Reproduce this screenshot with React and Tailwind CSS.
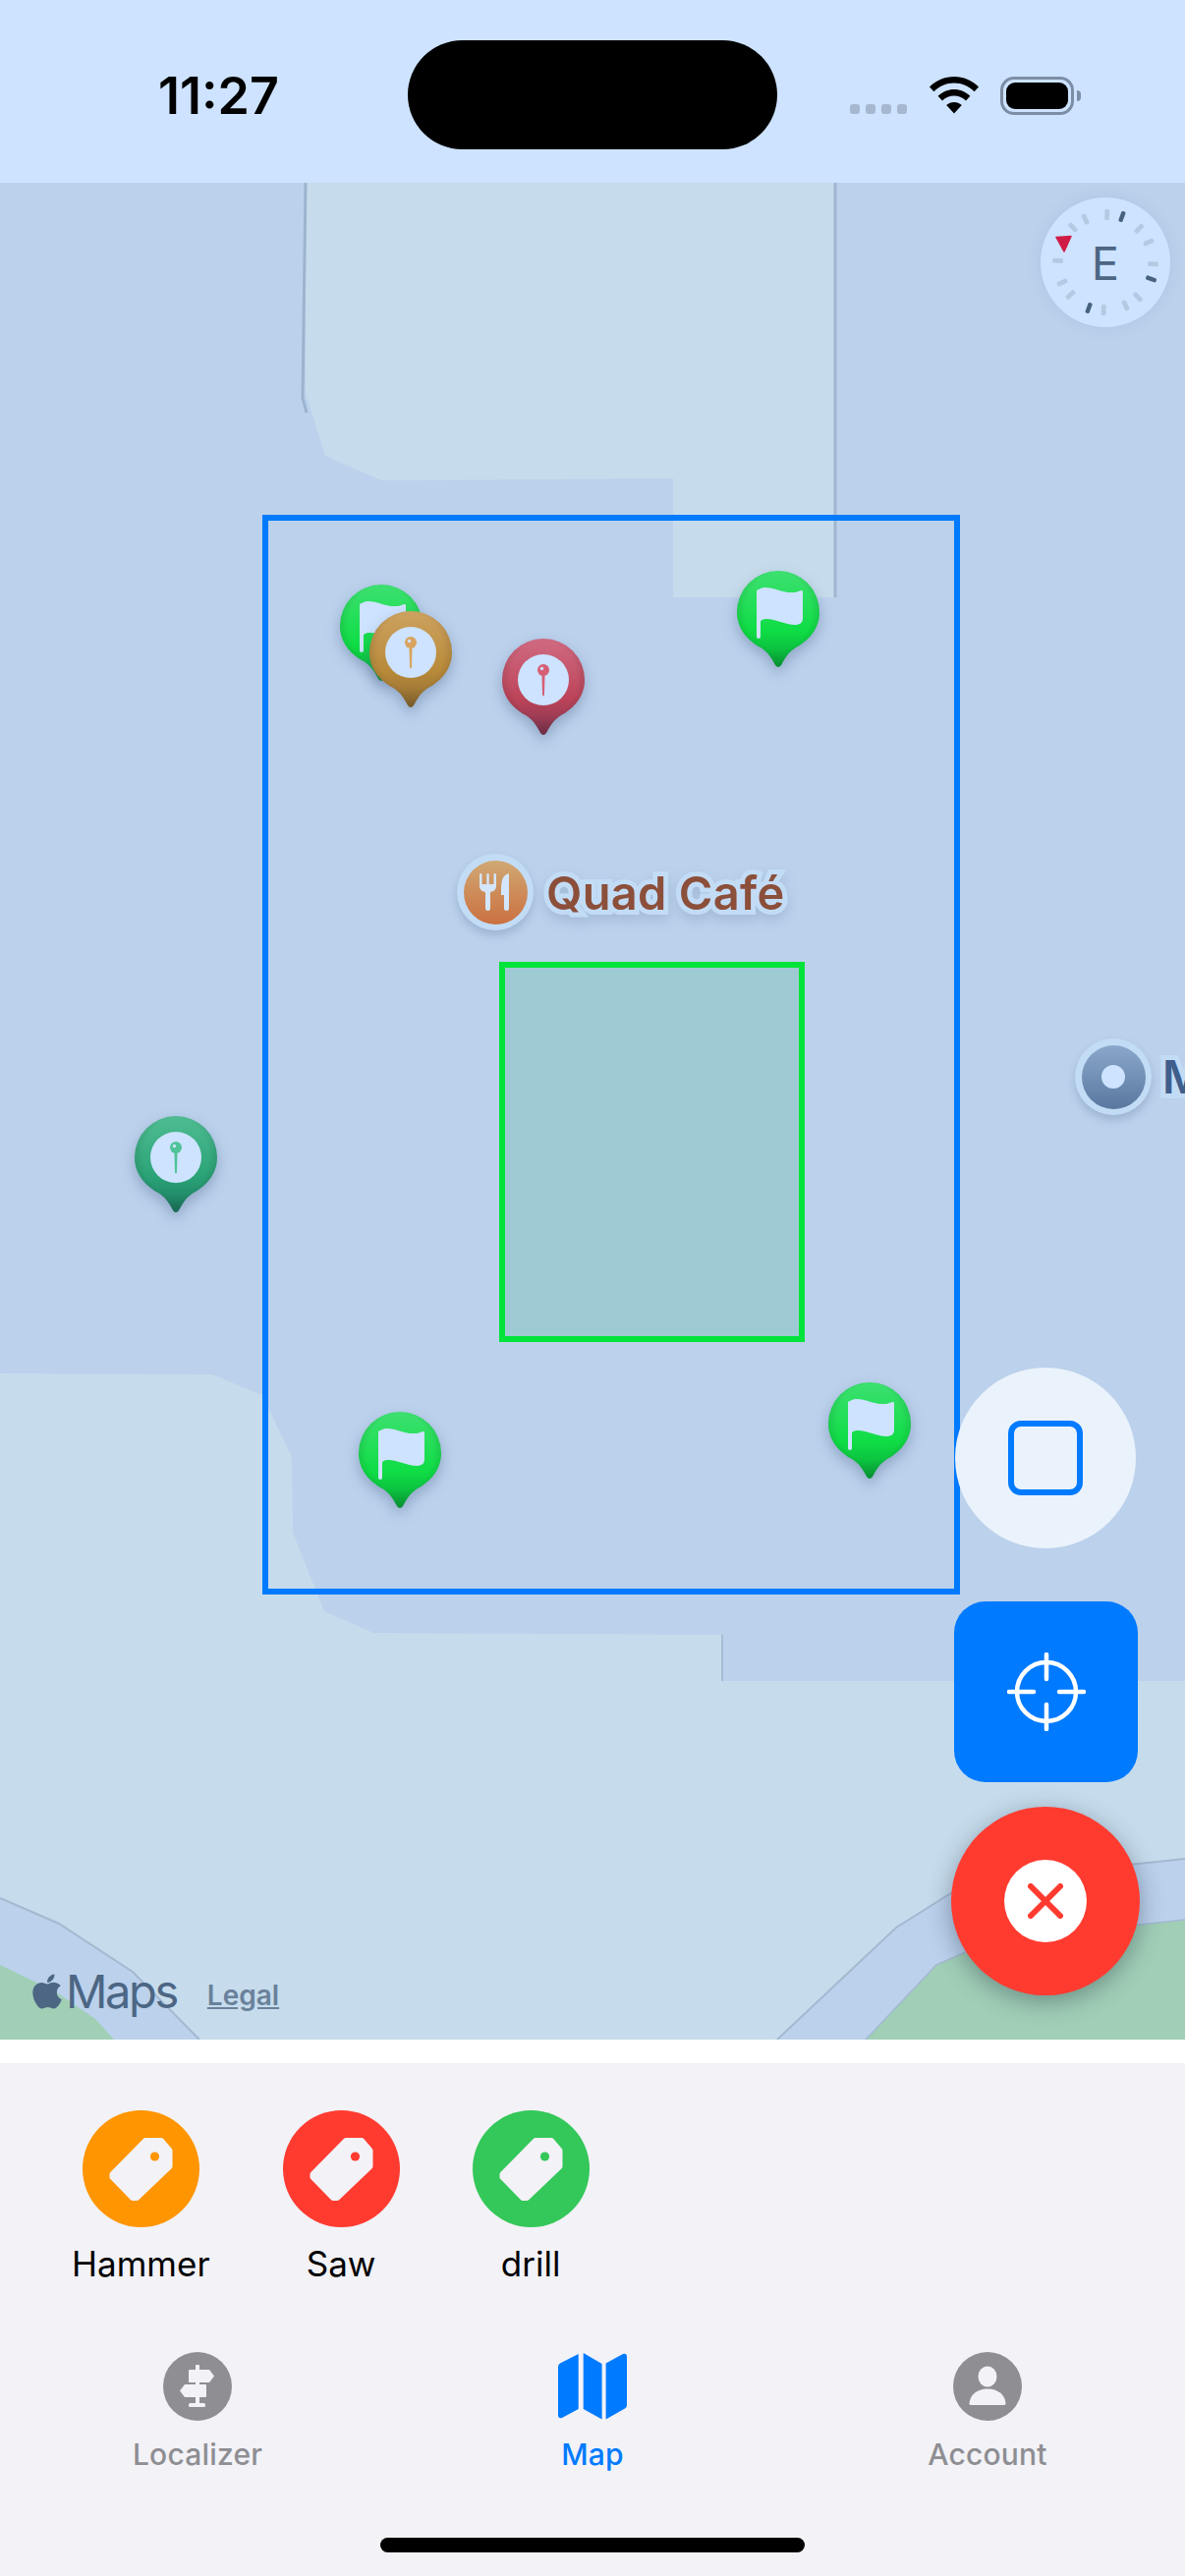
import React from "react";
import { FaApple } from "react-icons/fa";

const font = "font-['Inter','Liberation_Sans',sans-serif]";

function Flag() {
  return (
    <g fill="#cde3ff">
      <rect x="20" y="19" width="4" height="50" rx="2" />
      <path d="M20 24C20 19 24 17 29 17C38 17 47 23 58 22C61 22 64 20 66 20C67 20 67 21 67 22V48C67 53 64 55 59 55C49 55 40 49 30 49C27 49 24 50 24 52V40H20Z" />
    </g>
  );
}

function Needle({ tone }) {
  return (
    <g>
      <circle cx="42" cy="42" r="26" fill="#cde3ff" />
      <path d="M40.4 34H43.6L43 57Q42 60 41 57Z" fill={tone} />
      <circle cx="42" cy="32" r="6" fill={tone} />
      <circle cx="40.5" cy="30.5" r="1.7" fill="#cde3ff" />
    </g>
  );
}

function Pin({ className, id, top, mid, bottom, tone, flag }) {
  return (
    <svg
      className={`absolute w-[84px] h-[100px] drop-shadow-[0_6px_7px_rgba(70,95,135,0.38)] ${className}`}
      viewBox="0 0 84 100"
    >
      <defs>
        <linearGradient id={id} x1="0" y1="0" x2="0" y2="1">
          <stop offset="0" stopColor={top} />
          <stop offset="0.62" stopColor={mid} />
          <stop offset="1" stopColor={bottom} />
        </linearGradient>
        <radialGradient id={`${id}e`} cx="0.5" cy="0.42" r="0.55">
          <stop offset="0.72" stopColor="#000" stopOpacity="0" />
          <stop offset="1" stopColor="#000" stopOpacity="0.14" />
        </radialGradient>
      </defs>
      <path
        d="M42 0A42 42 0 0 1 84 42C84 59 73 71 60 78C53 82 48 90 45 96Q42 100 39 96C36 90 31 82 24 78C11 71 0 59 0 42A42 42 0 0 1 42 0Z"
        fill={`url(#${id})`}
      />
      <path
        d="M42 0A42 42 0 0 1 84 42C84 59 73 71 60 78C53 82 48 90 45 96Q42 100 39 96C36 90 31 82 24 78C11 71 0 59 0 42A42 42 0 0 1 42 0Z"
        fill={`url(#${id}e)`}
      />
      {flag ? <Flag /> : <Needle tone={tone} />}
    </svg>
  );
}

function MapBase() {
  return (
    <svg className="absolute inset-0 w-full h-full" viewBox="0 186 1206 1890" preserveAspectRatio="none">
      <rect x="0" y="186" width="1206" height="1890" fill="#bbd1ec" />
      <path d="M311 186H850V608H685V487L388 489L331 464L311 400Z" fill="#c6dcec" />
      <path d="M311 186L308 405L312 420" fill="none" stroke="#9db4ce" strokeWidth="3" />
      <path d="M850 186V608" fill="none" stroke="#a0b6cf" strokeWidth="3" />
      <path
        d="M0 1398L216 1399L267 1420L297 1483L298 1560L330 1640L380 1662L735 1664V1711H1206V2076H0Z"
        fill="#c6dcec"
      />
      <path d="M735 1664V1711" fill="none" stroke="#9db4ce" strokeWidth="1.5" />
      <path d="M0 1932L60 1958L135 2007L203 2076H0Z" fill="#bbd1ec" />
      <path d="M0 1932L60 1958L135 2007L203 2076" fill="none" stroke="#a3b9d0" strokeWidth="2" />
      <path d="M0 2000L56 2027L97 2055L116 2076H0Z" fill="#a0cfb6" />
      <path d="M791 2076L912 1962L987 1915L1206 1892V2076Z" fill="#bbd1ec" />
      <path d="M791 2076L912 1962L987 1915L1206 1892" fill="none" stroke="#a3b9d0" strokeWidth="2" />
      <path d="M881 2076L953 2000L1010 1975L1206 1954V2076Z" fill="#a0cfb6" />
      <path d="M881 2076L953 2000L1010 1975L1206 1954" fill="none" stroke="#a3b9d0" strokeWidth="1.5" />
    </svg>
  );
}

const compassLight = [2, 45, 65, 92, 137, 155, 182, 227, 245, 272, 317, 335];
const compassDark = [20, 110, 200];

function Compass() {
  return (
    <div className="absolute left-[1059px] top-[15px] w-[132px] h-[132px] rounded-full bg-[#cde3ff] shadow-[0_0_14px_rgba(120,150,190,0.18)] flex items-center justify-center">
      <svg className="absolute inset-0 w-full h-full" viewBox="-66 -66 132 132">
        {compassLight.map((a) => (
          <rect key={a} x="-2.4" y="-54" width="4.8" height="11" rx="1.5" fill="#b3cbe2" transform={`rotate(${a})`} />
        ))}
        {compassDark.map((a) => (
          <rect key={a} x="-2.2" y="-55" width="4.4" height="11" rx="1.5" fill="#47627f" transform={`rotate(${a})`} />
        ))}
        <path d="M-50 -25.5L-35 -26.5L-42 -11Z" fill="#d01c44" stroke="#d01c44" strokeWidth="1.5" strokeLinejoin="round" />
      </svg>
      <span className={`relative text-[47px] leading-none font-normal text-[#4c6684] ${font}`}>E</span>
    </div>
  );
}

function PlaceLabel() {
  return (
    <div className="absolute left-[465px] top-[683px] flex items-center">
      <div className="w-[78px] h-[78px] rounded-full bg-[#c3dcf6] shadow-[0_5px_8px_rgba(80,105,145,0.28)] flex items-center justify-center">
        <svg className="w-[65px] h-[65px]" viewBox="0 0 65 65">
          <defs>
            <linearGradient id="cafe" x1="0" y1="0" x2="0" y2="1">
              <stop offset="0" stopColor="#d0a873" />
              <stop offset="1" stopColor="#cb7040" />
            </linearGradient>
          </defs>
          <circle cx="32.5" cy="32.5" r="32.5" fill="url(#cafe)" />
          <path
            d="M16 14Q16 13 17.2 13Q18.5 13 18.5 14V24H23.3V14Q23.3 13 24.5 13Q25.7 13 25.7 14V24H30.5V14Q30.5 13 31.7 13Q33 13 33 14V26Q33 31 27 32V49Q27 51 24.5 51Q22 51 22 49V32Q16 31 16 26Z"
            fill="#d3e6fb"
          />
          <path d="M46 14V49Q46 51 43.5 51Q41 51 41 49V35H38V27Q38 17 44 13.5Q46 13 46 14Z" fill="#d3e6fb" />
        </svg>
      </div>
      <span
        className={`ml-[13px] text-[47px] leading-none font-semibold tracking-[0.3px] text-[#8b4f3a] whitespace-nowrap [-webkit-text-stroke:10px_#c3dcf6] [paint-order:stroke_fill] drop-shadow-[0_6px_6px_rgba(80,105,145,0.2)] ${font}`}
      >
        Quad Café
      </span>
    </div>
  );
}

function MetroLabel() {
  return (
    <div className="absolute left-[1094px] top-[871px] flex items-center">
      <div className="w-[78px] h-[78px] rounded-full bg-[#c3dcf6] shadow-[0_5px_8px_rgba(80,105,145,0.28)] flex items-center justify-center">
        <div className="w-[65px] h-[65px] rounded-full bg-gradient-to-b from-[#8ba8cb] to-[#5a789f] flex items-center justify-center">
          <div className="w-[24px] h-[24px] rounded-full bg-[#cde3ff]" />
        </div>
      </div>
      <span
        className={`ml-[11px] text-[46px] leading-none font-semibold text-[#3f5e8c] whitespace-nowrap [-webkit-text-stroke:10px_#c3dcf6] [paint-order:stroke_fill] ${font}`}
      >
        M
      </span>
    </div>
  );
}

function MapButtons() {
  return (
    <>
      <div className="absolute left-[972px] top-[1206px] w-[184px] h-[184px] rounded-full bg-[#eaf2fb] flex items-center justify-center">
        <div className="w-[76px] h-[76px] rounded-[13px] border-[6px] border-[#007aff]" />
      </div>
      <div className="absolute left-[971px] top-[1444px] w-[187px] h-[184px] rounded-[32px] bg-[#007aff] flex items-center justify-center">
        <svg className="w-[80px] h-[80px]" viewBox="-40 -40 80 80" fill="none" stroke="#fff" strokeWidth="4.5" strokeLinecap="round">
          <circle r="30" />
          <path d="M0 -38V-13M0 13V38M-38 0H-13M13 0H38" />
        </svg>
      </div>
      <div className="absolute left-[968px] top-[1653px] w-[192px] h-[192px] rounded-full bg-[#ff3b30] shadow-[0_6px_24px_rgba(40,50,70,0.42)] flex items-center justify-center">
        <div className="w-[84px] h-[84px] rounded-full bg-white flex items-center justify-center">
          <svg className="w-[36px] h-[36px]" viewBox="0 0 36 36" fill="none" stroke="#ff3b30" strokeWidth="6" strokeLinecap="round">
            <path d="M3 3L33 33M33 3L3 33" />
          </svg>
        </div>
      </div>
    </>
  );
}

function Tag({ color }) {
  return (
    <div className="w-[119px] h-[119px] rounded-full" style={{ backgroundColor: color }}>
      <svg className="w-full h-full" viewBox="0 0 119 119">
        <path
          d="M64 31H80L88.5 41V57L55 89H51L30.5 68V65Z"
          fill="#f2f2f7"
          stroke="#f2f2f7"
          strokeWidth="6"
          strokeLinejoin="round"
        />
        <circle cx="73.5" cy="47" r="4.6" fill={color} />
      </svg>
    </div>
  );
}

function ToolItem({ color, label }) {
  return (
    <div className="flex flex-col items-center">
      <Tag color={color} />
      <span className={`mt-[18px] text-[35px] leading-[38px] text-black ${font}`}>{label}</span>
    </div>
  );
}

function TabLabel({ children, active }) {
  return (
    <span className={`mt-[17px] text-[30px] leading-[34px] font-medium tracking-[0.2px] ${active ? "text-[#007aff]" : "text-[#8e8e93]"} ${font}`}>
      {children}
    </span>
  );
}

export default function App() {
  return (
    <div className={`w-[1206px] h-[2622px] flex flex-col overflow-hidden bg-white ${font}`}>
      <div className="h-[186px] shrink-0 bg-[#cde3ff] flex items-start pl-[161px]">
        <div className="w-[254px] pt-[72px] text-[52px] leading-[52px] font-semibold text-black">11:27</div>
        <div className="w-[376px] h-[111px] mt-[41px] rounded-[56px] bg-black" />
        <div className="ml-[74px] mt-[78px] flex items-end h-[39px] relative">
          <div className="flex gap-[6px] pb-[1px]">
            <div className="w-[10px] h-[10px] rounded-[3px] bg-[#a5b8cf]" />
            <div className="w-[10px] h-[10px] rounded-[3px] bg-[#a5b8cf]" />
            <div className="w-[10px] h-[10px] rounded-[3px] bg-[#a5b8cf]" />
            <div className="w-[10px] h-[10px] rounded-[3px] bg-[#a5b8cf]" />
          </div>
          <svg className="ml-[23px] w-[50px] h-[38px] mb-[1px]" viewBox="0 0 50 38">
            <path d="M25 0C34.5 0 43.2 3.6 50 10.5L45.6 15.3C40 9.7 32.8 6.6 25 6.6C17.2 6.6 10 9.7 4.4 15.3L0 10.5C6.8 3.6 15.5 0 25 0Z" />
            <path d="M25 13C31.2 13 36.8 15.4 41.4 19.8L37 24.6C33.6 21.4 29.5 19.6 25 19.6C20.5 19.6 16.4 21.4 13 24.6L8.6 19.8C13.2 15.4 18.8 13 25 13Z" />
            <path d="M25 26C27.9 26 30.5 27 32.8 29L25 37.5L17.2 29C19.5 27 22.1 26 25 26Z" />
          </svg>
          <div className="ml-[22px] w-[75px] h-[39px] rounded-[14px] border-[3px] border-[#7c8ea5] p-[3px]">
            <div className="w-full h-full rounded-[9px] bg-black" />
          </div>
          <div className="ml-[3px] mb-[14px] w-[4px] h-[11px] rounded-r-[4px] bg-[#7c8ea5]" />
        </div>
      </div>

      <div className="relative h-[1890px] shrink-0 overflow-hidden">
        <MapBase />
        <div className="absolute left-[267px] top-[338px] w-[710px] h-[1099px] border-[6px] border-[#007aff]" />
        <div className="absolute left-[508px] top-[793px] w-[311px] h-[387px] border-[6px] border-[#00e33a] bg-[#9ecbd3]" />

        <Pin className="left-[346px] top-[409px]" id="g1" top="#3de070" mid="#0fdd45" bottom="#08a83a" flag />
        <Pin className="left-[376px] top-[436px]" id="o1" top="#cda260" mid="#b98a3a" bottom="#8c6a32" tone="#d9a45f" />
        <Pin className="left-[511px] top-[464px]" id="r1" top="#cf6b82" mid="#bd4459" bottom="#7f3550" tone="#d65f75" />
        <Pin className="left-[750px] top-[395px]" id="g2" top="#3de070" mid="#0fdd45" bottom="#08a83a" flag />
        <Pin className="left-[137px] top-[950px]" id="t1" top="#4fbc92" mid="#2ba377" bottom="#1b7a60" tone="#4fc397" />
        <Pin className="left-[365px] top-[1251px]" id="g3" top="#3de070" mid="#0fdd45" bottom="#08a83a" flag />
        <Pin className="left-[843px] top-[1221px]" id="g4" top="#3de070" mid="#0fdd45" bottom="#08a83a" flag />

        <PlaceLabel />
        <MetroLabel />
        <Compass />
        <MapButtons />

        <div className="absolute left-[29px] top-[1819px] flex items-end text-[#4c6684]">
          <FaApple className="w-[38px] h-[40px] mb-[2px]" />
          <span className="text-[47px] leading-[44px] font-normal tracking-[-2.4px]">Maps</span>
          <span className="ml-[31px] mb-[3px] text-[28px] leading-[30px] font-semibold underline text-[#6a819b]">Legal</span>
        </div>
      </div>

      <div className="h-[24px] shrink-0 bg-white" />

      <div className="relative flex-1 bg-[#f2f2f7]">
        <div className="flex gap-[74px] pl-[73px] pt-[48px]">
          <ToolItem color="#ff9500" label="Hammer" />
          <ToolItem color="#ff3b30" label="Saw" />
          <ToolItem color="#34c759" label="drill" />
        </div>
        <div className="mt-[71px] grid grid-cols-3">
          <div className="flex flex-col items-center">
            <div className="w-[70px] h-[70px] rounded-full bg-[#8e8e93]">
              <svg className="w-full h-full" viewBox="0 0 70 70" fill="#f2f2f7">
                <rect x="33" y="13" width="4" height="42" rx="1" />
                <path d="M26 19Q26 18 27 18H47L52 24.5L47 31H27Q26 31 26 30Z" />
                <path d="M44 34Q44 33 43 33H22L17 39.5L22 46H43Q44 46 44 45Z" />
                <rect x="26" y="52" width="17" height="4" rx="1.5" />
              </svg>
            </div>
            <TabLabel>Localizer</TabLabel>
          </div>
          <div className="flex flex-col items-center">
            <svg className="w-[70px] h-[70px]" viewBox="0 0 70 70" fill="#007aff">
              <path d="M20.7 2V58L4 67Q0 68 0 64V15Q0 12.5 2 11.5Z" />
              <path d="M25.7 1L44.6 12V68.5L25.7 58Z" />
              <path d="M48.6 11.5L66 2Q70 1 70 5V54Q70 56.5 68 57.5L48.6 68.5Z" />
            </svg>
            <TabLabel active>Map</TabLabel>
          </div>
          <div className="flex flex-col items-center">
            <div className="w-[70px] h-[70px] rounded-full bg-[#8e8e93]">
              <svg className="w-full h-full" viewBox="0 0 70 70" fill="#f2f2f7">
                <ellipse cx="35" cy="25" rx="9.5" ry="10.5" />
                <path d="M18 54Q16.5 54 16.5 52.5C17 44 24 37.5 35 37.5C46 37.5 53 44 53.5 52.5Q53.5 54 52 54Z" />
              </svg>
            </div>
            <TabLabel>Account</TabLabel>
          </div>
        </div>
        <div className="absolute left-[387px] top-[483px] w-[432px] h-[15px] rounded-full bg-black" />
      </div>
    </div>
  );
}
